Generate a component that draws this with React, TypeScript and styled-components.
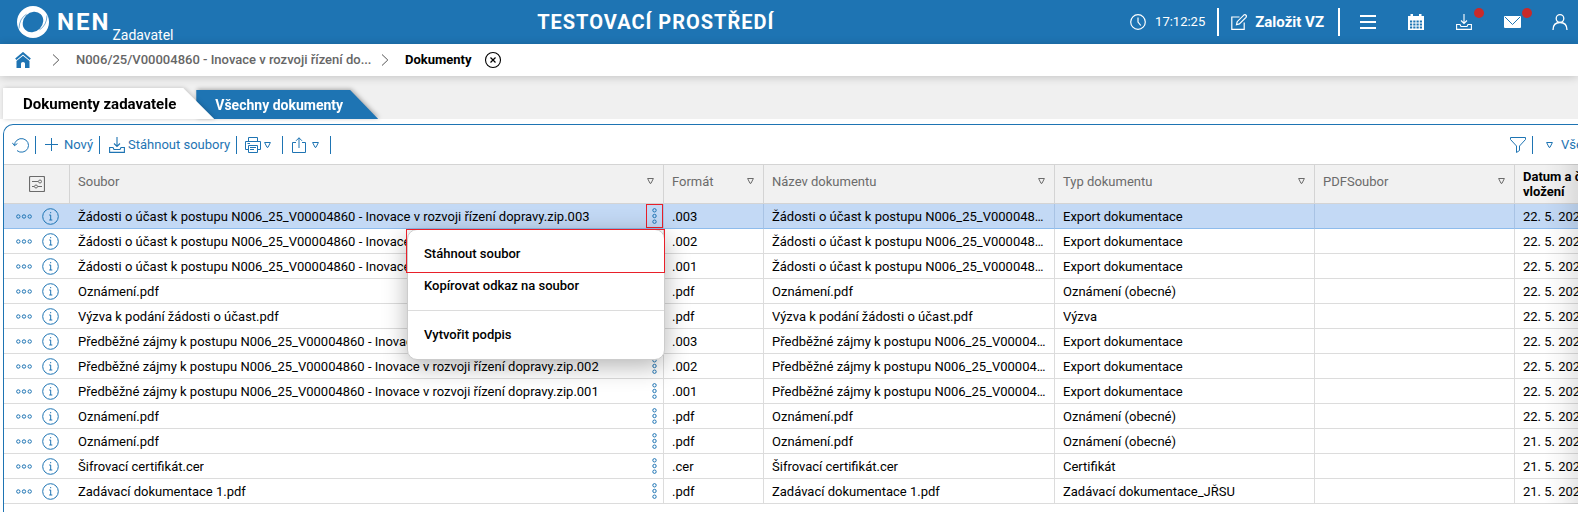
import React from "react";
import styled, { createGlobalStyle, css } from "styled-components";

const BLUE = "#1e74b3";
const LINE = "#dcdcdc";

const GlobalStyle = createGlobalStyle`
  *, *::before, *::after { box-sizing: border-box; }
  html, body { margin: 0; background: #fff; }
  body {
    font-family: Roboto, "Liberation Sans", sans-serif;
    font-size: 13px;
    line-height: 16px;
    color: #000;
    overflow: hidden;
  }
  button {
    font: inherit; color: inherit; background: none; border: 0; padding: 0; margin: 0;
    cursor: pointer; white-space: nowrap;
  }
  a { color: inherit; text-decoration: none; }
  svg { display: block; flex: none; }
`;

const Page = styled.div`
  display: flex;
  flex-direction: column;
  min-height: 100vh;
`;

/* ---------- header ---------- */
const Header = styled.header`
  display: flex;
  align-items: center;
  height: 44px;
  padding: 0 10px 0 17px;
  background: ${BLUE};
  color: #fff;
`;
const Brand = styled.a`
  display: flex;
  align-items: center;
  height: 100%;
`;
const BrandName = styled.span`
  margin: 0 2px 0 8px;
  font-size: 24px;
  line-height: 28px;
  font-weight: 700;
  letter-spacing: 2px;
`;
const BrandRole = styled.span`
  align-self: flex-end;
  padding-bottom: 1px;
  font-size: 14px;
  line-height: 16px;
`;
const Title = styled.h1`
  flex: 1;
  margin: 0;
  padding-left: 8px;
  text-align: center;
  font-size: 20px;
  line-height: 24px;
  font-weight: 700;
  letter-spacing: 1px;
`;
const Clock = styled.div`
  display: flex;
  align-items: center;
  gap: 9px;
`;
const HeaderRule = styled.span`
  width: 2px;
  height: 28px;
  margin: 0 12px;
  background: #fff;
`;
const CreateButton = styled.button`
  display: flex;
  align-items: center;
  gap: 8px;
  padding-right: 2px;
  font-size: 15px;
  font-weight: 700;
`;
const HeaderIcons = styled.nav`
  display: flex;
  gap: 32px;
  margin-left: 8px;
`;
const IconButton = styled.button`
  position: relative;
  display: flex;
  align-items: center;
  justify-content: center;
  width: 16px;
  height: 16px;
`;
const Dot = styled.span`
  position: absolute;
  top: -6px;
  right: -12px;
  width: 10px;
  height: 10px;
  border-radius: 50%;
  background: #c92a2a;
`;

/* ---------- breadcrumb ---------- */
const Crumbs = styled.nav`
  position: relative;
  display: flex;
  align-items: center;
  height: 32px;
  padding-left: 15px;
  background: #fff;
  box-shadow: 0 1px 10px rgba(0, 0, 0, 0.2);
  font-weight: 500;
`;
const CrumbArrow = styled.svg`
  margin: 0 16px 0 21px;
`;
const CrumbLink = styled.a`
  flex: 0 0 auto;
  width: 284px;
  white-space: nowrap;
  color: #666;
`;
const CrumbCurrent = styled.span`
  margin-right: 12px;
  font-weight: 700;
`;

/* ---------- tabs ---------- */
const Tabs = styled.div`
  display: flex;
  align-items: flex-end;
  height: 43px;
  padding-left: 3px;
  background: #f0f0f0;
`;
const TabShadow = styled.div<{ $active?: boolean }>`
  position: relative;
  z-index: ${(p) => (p.$active ? 1 : 0)};
  margin-left: ${(p) => (p.$active ? 0 : -18)}px;
  filter: drop-shadow(1px -1px 2px rgba(0, 0, 0, 0.3));
  ${(p) => p.$active && css`filter: drop-shadow(1px 0 2px rgba(0, 0, 0, 0.2));`}
`;
const Tab = styled.button<{ $active?: boolean }>`
  display: block;
  height: 29px;
  padding: 0 35px 0 19px;
  background: ${BLUE};
  color: #fff;
  font-size: 14px;
  font-weight: 700;
  clip-path: polygon(0 0, calc(100% - 28px) 0, 100% 100%, 0 100%);
  ${(p) =>
    p.$active &&
    css`
      height: 31px;
      padding: 0 38px 0 20px;
      background: #fff;
      color: #000;
      font-size: 15px;
      clip-path: polygon(0 0, calc(100% - 31px) 0, 100% 100%, 0 100%);
    `}
`;

/* ---------- panel ---------- */
const Panel = styled.main`
  flex: 1;
  margin: 5px 0 0 3px;
  border: solid ${BLUE};
  border-width: 1px 0 0 1px;
  border-top-left-radius: 10px;
  overflow: hidden;
  position: relative;
`;
const Toolbar = styled.div`
  display: flex;
  align-items: center;
  height: 39px;
  padding-left: 8px;
  color: ${BLUE};
`;
const ToolButton = styled.button<{ $gap?: number; $dropdown?: boolean }>`
  display: flex;
  align-items: center;
  gap: ${(p) => p.$gap ?? 3}px;
  padding-right: ${(p) => (p.$dropdown ? 5 : 0)}px;
`;
const ToolRule = styled.span<{ $after?: number }>`
  flex: none;
  width: 1px;
  height: 18px;
  margin: 0 ${(p) => p.$after ?? 9}px 0 6px;
  background: ${BLUE};
`;
const Spacer = styled.span`
  flex: 1;
`;
const ViewPicker = styled.button`
  display: flex;
  align-items: center;
  gap: 8px;
  width: 32px;
  overflow: hidden;
`;

const TableArea = styled.div`
  position: relative;
`;
const EdgeShade = styled.div`
  position: absolute;
  inset: 0 0 0 auto;
  width: 34px;
  background: linear-gradient(to right, rgba(0, 0, 0, 0), rgba(0, 0, 0, 0.03) 50%, rgba(0, 0, 0, 0.09));
  pointer-events: none;
`;
const Grid = styled.table`
  width: 1671px;
  min-width: 100%;
  table-layout: fixed;
  border-collapse: separate;
  border-spacing: 0;
`;
const HeadCell = styled.th<{ $sorted?: boolean }>`
  height: 40px;
  padding: 0 9px 0 8px;
  border: solid #d4d4d4;
  border-width: 1px 1px 1px 0;
  background: #f1f1f1;
  color: ${(p) => (p.$sorted ? "#000" : "#6b6b6b")};
  font-weight: ${(p) => (p.$sorted ? 700 : 400)};
  line-height: 15px;
  text-align: left;
`;
const HeadInner = styled.div`
  display: flex;
  align-items: center;
  justify-content: space-between;
  padding-bottom: 6px;
`;
const HeadTools = styled.div`
  display: flex;
  padding-left: 17px;
`;
const Cell = styled.td<{ $plain?: boolean }>`
  position: relative;
  height: 25px;
  padding: 0 6px 0 8px;
  border: solid ${LINE};
  border-width: 0 ${(p) => (p.$plain ? 0 : 1)}px 1px 0;
`;
const Row = styled.tr<{ $selected?: boolean }>`
  ${(p) =>
    p.$selected &&
    css`
      ${Cell} {
        background: #c3d9f5;
        border-bottom-color: #8ebcec;
        border-right-color: #a9c3e4;
      }
    `}
`;
const CellText = styled.div`
  padding-top: 2px;
  overflow: hidden;
  text-overflow: ellipsis;
  white-space: nowrap;
`;
const RowActions = styled.div`
  display: flex;
  align-items: center;
  gap: 10px;
  padding-left: 4px;
  color: ${BLUE};
`;
const FileCell = styled.div`
  display: flex;
  align-items: center;
  justify-content: space-between;
`;
const MoreButton = styled.button<{ $marked?: boolean }>`
  display: flex;
  align-items: center;
  justify-content: center;
  width: 17px;
  height: 24px;
  margin-right: -6px;
  color: ${BLUE};
  outline: ${(p) => (p.$marked ? "1px solid #e8202a" : "none")};
  outline-offset: -1px;
`;

/* ---------- context menu ---------- */
const Menu = styled.div`
  position: absolute;
  z-index: 2;
  top: 25px;
  right: -2px;
  width: 258px;
  border: 1px solid #ccc;
  border-radius: 10px;
  background: #fff;
  box-shadow: 0 6px 24px rgba(0, 0, 0, 0.3);
  font-weight: 500;
`;
const MenuGroup = styled.div`
  padding: 8px 0;
  & + & { border-top: 1px solid ${LINE}; }
`;
const MenuItem = styled.button`
  display: block;
  width: 100%;
  height: 32px;
  padding: 0 16px;
  text-align: left;
`;
const MenuMark = styled.div`
  position: absolute;
  top: -1px;
  left: -2px;
  right: -1px;
  height: 44px;
  border: 1px solid #e8202a;
  pointer-events: none;
`;

/* ---------- icons ---------- */
const stroke = { fill: "none", stroke: "currentColor", strokeWidth: 1 } as const;

const Logo = () => (
  <svg width="32" height="32" viewBox="0 0 32 32" aria-hidden="true">
    <circle cx="16" cy="16" r="16" fill="#fff" />
    <ellipse cx="16" cy="16" rx="11" ry="9.500" transform="rotate(-45 16 16)" fill={BLUE} />
    <path d="M2 22.500Q2.300 12.500 9.500 8.200" fill="none" stroke={BLUE} strokeWidth=".6" />
    <path d="M30 9.500Q29.700 19.500 22.500 23.800" fill="none" stroke={BLUE} strokeWidth=".6" />
  </svg>
);
const ClockIcon = () => (
  <svg width="16" height="16" viewBox="0 0 16 16" {...stroke} strokeWidth={1.2}>
    <circle cx="8" cy="8" r="7.3" />
    <path d="M8 3.500V8L10.800 11.500" />
  </svg>
);
const EditIcon = () => (
  <svg width="16" height="16" viewBox="0 0 16 16" {...stroke} strokeWidth={1.2}>
    <path d="M8.500 3H.8V15.300H13.200V8.500" />
    <path d="M5.500 10.700L6.200 7.700L12.800 1.100Q14 .3 15 1.200Q15.800 2.200 15 3.300L8.400 9.900Z" />
  </svg>
);
const MenuIcon = () => (
  <svg width="16" height="16" viewBox="0 0 16 16" {...stroke} strokeWidth={2}>
    <path d="M0 2H16M0 8H16M0 14H16" />
  </svg>
);
const CalendarIcon = () => (
  <svg width="16" height="16" viewBox="0 0 16 16">
    <path d="M0 2H2.500V0H5V2H11V0H13.500V2H16V16H0Z" fill="#fff" />
    <path d="M2 7.500H14M2 10.500H14M2 13.500H14" stroke={BLUE} strokeWidth="2" strokeDasharray="2.200 1.060" />
  </svg>
);
const DownloadIcon = () => (
  <svg width="16" height="16" viewBox="0 0 16 16" {...stroke} strokeWidth={1.1}>
    <path d="M8 0V9.500M5 6.500L8 9.500L11 6.500" />
    <path d="M4 10.500H.6V15.400H15.400V10.500H12L11 12.500H5Z" />
  </svg>
);
const MailIcon = () => (
  <svg width="17" height="12" viewBox="0 0 17 12">
    <rect width="17" height="12" rx="1" fill="#fff" />
    <path d="M1 1L8.500 8.500L16 1" fill="none" stroke={BLUE} strokeWidth="1" />
  </svg>
);
const UserIcon = () => (
  <svg width="16" height="16" viewBox="0 0 16 16" {...stroke} strokeWidth={1.3}>
    <circle cx="8" cy="4.500" r="3.800" />
    <path d="M1 16Q1 8.500 8 8.500T15 16" />
  </svg>
);
const HomeIcon = () => (
  <svg width="16" height="16" viewBox="0 0 16 16" fill={BLUE}>
    <path d="M.8 7.200L8 1.200L15.200 7.200" fill="none" stroke={BLUE} strokeWidth="2" />
    <path d="M1.500 9L8 3.800L14.500 9V16H10V11.500Q10 10 8 10T6 11.500V16H1.500Z" />
  </svg>
);
const Arrow = () => (
  <CrumbArrow width="8" height="12" viewBox="0 0 8 12" fill="none" stroke="#555" strokeWidth="1">
    <path d="M1 .5L6.800 6L1 11.500" />
  </CrumbArrow>
);
const CloseIcon = () => (
  <svg width="18" height="18" viewBox="0 0 18 18" fill="none" stroke="#000">
    <circle cx="9" cy="9" r="7.500" strokeWidth="1.100" />
    <path d="M6.500 6.500L11.500 11.500M11.500 6.500L6.500 11.500" strokeWidth="1.200" />
  </svg>
);
const RefreshIcon = () => (
  <svg width="17" height="16" viewBox="0 0 17 16" {...stroke}>
    <path d="M2.500 8.500A7 6.800 0 1 1 5 13.600" />
    <path d="M.3 5.800L2.500 8.700L5.400 6.500" />
  </svg>
);
const PlusIcon = () => (
  <svg width="13" height="13" viewBox="0 0 13 13" {...stroke}>
    <path d="M6.500 0V13M0 6.500H13" />
  </svg>
);
const PrintIcon = () => (
  <svg width="16" height="16" viewBox="0 0 16 16" {...stroke}>
    <path d="M3.500 4.500V.5H12.500V4.500M3.500 12.500H.5V4.500H15.500V12.500H12.500" />
    <path d="M3.500 8.500H12.500V15.500H3.500ZM5 10.500H11M5 12.500H9M2.500 6.500H5" />
  </svg>
);
const ShareIcon = () => (
  <svg width="14" height="16" viewBox="0 0 14 16" {...stroke}>
    <path d="M4 5.500H.5V15.500H13.500V5.500H10M7 11V.8M4 3.800L7 .8L10 3.800" />
  </svg>
);
const Triangle = () => (
  <svg width="7" height="6" viewBox="0 0 7 6" {...stroke}>
    <path d="M.6 .5H6.400L4 5.300H3Z" />
  </svg>
);
const FilterIcon = () => (
  <svg width="16" height="16" viewBox="0 0 16 16" {...stroke}>
    <path d="M.5 .5H15.500V2.500L9.500 9V13.500L6.500 15.500V9L.5 2.500Z" />
  </svg>
);
const SettingsIcon = () => (
  <svg width="16" height="16" viewBox="0 0 16 16" {...stroke}>
    <rect x=".5" y=".5" width="15" height="15" rx="1" strokeWidth="1.200" />
    <path d="M3 5.500H9M3 10.500H5M9 10.500H13" />
    <circle cx="11" cy="5.500" r="1.500" />
    <circle cx="7" cy="10.500" r="1.500" />
  </svg>
);
const DotsIcon = ({ vertical }: { vertical?: boolean }) =>
  vertical ? (
    <svg width="5" height="16" viewBox="0 0 5 16" {...stroke}>
      {[2.3, 8, 13.7].map((y) => <circle key={y} cx="2.500" cy={y} r="1.700" />)}
    </svg>
  ) : (
    <svg width="16" height="5" viewBox="0 0 16 5" {...stroke}>
      {[2.3, 8, 13.7].map((x) => <circle key={x} cx={x} cy="2.500" r="1.700" />)}
    </svg>
  );
const InfoIcon = () => (
  <svg width="17" height="17" viewBox="0 0 17 17" {...stroke}>
    <circle cx="8.500" cy="8.500" r="7.800" />
    <path d="M7.200 7H8.700V12M7.200 12H10.300M8 4.700H9.200" />
  </svg>
);

/* ---------- data ---------- */
const requests = "Žádosti o účast k postupu N006_25_V00004860 - Inovace v rozvoji řízení dopravy.zip";
const interests = "Předběžné zájmy k postupu N006_25_V00004860 - Inovace v rozvoji řízení dopravy.zip";

const rows: [string, string, string, string][] = [
  [`${requests}.003`, ".003", "Export dokumentace", "22. 5. 2025"],
  [`${requests}.002`, ".002", "Export dokumentace", "22. 5. 2025"],
  [`${requests}.001`, ".001", "Export dokumentace", "22. 5. 2025"],
  ["Oznámení.pdf", ".pdf", "Oznámení (obecné)", "22. 5. 2025"],
  ["Výzva k podání žádosti o účast.pdf", ".pdf", "Výzva", "22. 5. 2025"],
  [`${interests}.003`, ".003", "Export dokumentace", "22. 5. 2025"],
  [`${interests}.002`, ".002", "Export dokumentace", "22. 5. 2025"],
  [`${interests}.001`, ".001", "Export dokumentace", "22. 5. 2025"],
  ["Oznámení.pdf", ".pdf", "Oznámení (obecné)", "22. 5. 2025"],
  ["Oznámení.pdf", ".pdf", "Oznámení (obecné)", "21. 5. 2025"],
  ["Šifrovací certifikát.cer", ".cer", "Certifikát", "21. 5. 2025"],
  ["Zadávací dokumentace 1.pdf", ".pdf", "Zadávací dokumentace_JŘSU", "21. 5. 2025"],
];
const columns = ["Soubor", "Formát", "Název dokumentu", "Typ dokumentu", "PDFSoubor"];
const widths = [66, 594, 100, 291, 260, 200, 160];

const FileMenu = () => (
  <Menu role="menu">
    <MenuGroup>
      <MenuItem role="menuitem">Stáhnout soubor</MenuItem>
      <MenuItem role="menuitem">Kopírovat odkaz na soubor</MenuItem>
    </MenuGroup>
    <MenuGroup>
      <MenuItem role="menuitem">Vytvořit podpis</MenuItem>
    </MenuGroup>
    <MenuMark />
  </Menu>
);

export default function App() {
  return (
    <Page>
      <GlobalStyle />
      <Header>
        <Brand href="#">
          <Logo />
          <BrandName>NEN</BrandName>
          <BrandRole>Zadavatel</BrandRole>
        </Brand>
        <Title>TESTOVACÍ PROSTŘEDÍ</Title>
        <Clock><ClockIcon />17:12:25</Clock>
        <HeaderRule />
        <CreateButton><EditIcon />Založit VZ</CreateButton>
        <HeaderRule />
        <HeaderIcons>
          <IconButton aria-label="Menu"><MenuIcon /></IconButton>
          <IconButton aria-label="Kalendář"><CalendarIcon /></IconButton>
          <IconButton aria-label="Stažené soubory"><DownloadIcon /><Dot /></IconButton>
          <IconButton aria-label="Zprávy"><MailIcon /><Dot /></IconButton>
          <IconButton aria-label="Uživatel"><UserIcon /></IconButton>
        </HeaderIcons>
      </Header>

      <Crumbs>
        <a href="#" aria-label="Domů"><HomeIcon /></a>
        <Arrow />
        <CrumbLink href="#">N006/25/V00004860 - Inovace v rozvoji řízení do...</CrumbLink>
        <Arrow />
        <CrumbCurrent>Dokumenty</CrumbCurrent>
        <button aria-label="Zavřít"><CloseIcon /></button>
      </Crumbs>

      <Tabs role="tablist">
        <TabShadow $active><Tab $active role="tab" aria-selected>Dokumenty zadavatele</Tab></TabShadow>
        <TabShadow><Tab role="tab">Všechny dokumenty</Tab></TabShadow>
      </Tabs>

      <Panel>
        <Toolbar>
          <ToolButton aria-label="Obnovit"><RefreshIcon /></ToolButton>
          <ToolRule />
          <ToolButton $gap={6}><PlusIcon />Nový</ToolButton>
          <ToolRule />
          <ToolButton><DownloadIcon />Stáhnout soubory</ToolButton>
          <ToolRule $after={8} />
          <ToolButton $dropdown aria-label="Tisk"><PrintIcon /><Triangle /></ToolButton>
          <ToolRule />
          <ToolButton $dropdown $gap={6} aria-label="Export"><ShareIcon /><Triangle /></ToolButton>
          <ToolRule />
          <Spacer />
          <ToolButton aria-label="Filtr"><FilterIcon /></ToolButton>
          <ToolRule $after={13} />
          <ViewPicker><Triangle />Vše</ViewPicker>
        </Toolbar>

        <TableArea>
          <Grid>
            <colgroup>
              {widths.map((w, i) => <col key={i} width={w} />)}
            </colgroup>
            <thead>
              <tr>
                <HeadCell><HeadTools><SettingsIcon /></HeadTools></HeadCell>
                {columns.map((c) => (
                  <HeadCell key={c}><HeadInner>{c}<Triangle /></HeadInner></HeadCell>
                ))}
                <HeadCell $sorted>Datum a čas<br />vložení</HeadCell>
              </tr>
            </thead>
            <tbody>
              {rows.map(([name, format, type, date], i) => (
                <Row key={i} $selected={i === 0}>
                  <Cell $plain>
                    <RowActions>
                      <button aria-label="Akce"><DotsIcon /></button>
                      <button aria-label="Detail"><InfoIcon /></button>
                    </RowActions>
                  </Cell>
                  <Cell>
                    <FileCell>
                      <CellText>{name}</CellText>
                      <MoreButton $marked={i === 0} aria-label="Nabídka souboru"><DotsIcon vertical /></MoreButton>
                    </FileCell>
                    {i === 0 && <FileMenu />}
                  </Cell>
                  <Cell><CellText>{format}</CellText></Cell>
                  <Cell><CellText>{name}</CellText></Cell>
                  <Cell><CellText>{type}</CellText></Cell>
                  <Cell />
                  <Cell><CellText>{date}</CellText></Cell>
                </Row>
              ))}
            </tbody>
          </Grid>
          <EdgeShade />
        </TableArea>
      </Panel>
    </Page>
  );
}
